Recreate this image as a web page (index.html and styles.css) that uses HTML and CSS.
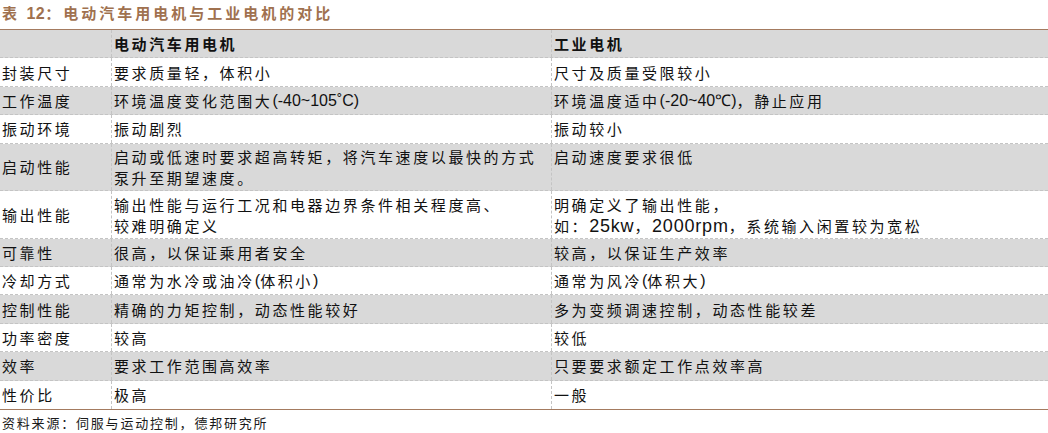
FILE: index.html
```html
<!DOCTYPE html>
<html lang="zh">
<head>
<meta charset="utf-8">
<link rel="stylesheet" href="styles.css">
</head>
<body>
<div class="page">
  <div class="title">表 <span class="num">12</span>：电动汽车用电机与工业电机的对比</div>
  <div class="table">
    <div class="row head gray">
      <div class="c1"></div>
      <div class="c2">电动汽车用电机</div>
      <div class="c3">工业电机</div>
    </div>
    <div class="row">
      <div class="c1">封装尺寸</div>
      <div class="c2">要求质量轻，体积小</div>
      <div class="c3">尺寸及质量受限较小</div>
    </div>
    <div class="row gray">
      <div class="c1">工作温度</div>
      <div class="c2">环境温度变化范围大<span class="lat">(-40~105˚C)</span></div>
      <div class="c3">环境温度适中<span class="lat">(-20~40℃)</span>，静止应用</div>
    </div>
    <div class="row">
      <div class="c1">振动环境</div>
      <div class="c2">振动剧烈</div>
      <div class="c3">振动较小</div>
    </div>
    <div class="row gray double">
      <div class="c1">启动性能</div>
      <div class="c2">启动或低速时要求超高转矩，将汽车速度以最快的方式<br>泵升至期望速度。</div>
      <div class="c3">启动速度要求很低</div>
    </div>
    <div class="row double">
      <div class="c1">输出性能</div>
      <div class="c2">输出性能与运行工况和电器边界条件相关程度高、<br>较难明确定义</div>
      <div class="c3">明确定义了输出性能，<br>如：<span class="lat big">25kw</span>，<span class="lat big">2000rpm</span>，系统输入闲置较为宽松</div>
    </div>
    <div class="row gray">
      <div class="c1">可靠性</div>
      <div class="c2">很高，以保证乘用者安全</div>
      <div class="c3">较高，以保证生产效率</div>
    </div>
    <div class="row">
      <div class="c1">冷却方式</div>
      <div class="c2">通常为水冷或油冷<span class="lat">(</span>体积小<span class="lat">)</span></div>
      <div class="c3">通常为风冷<span class="lat">(</span>体积大<span class="lat">)</span></div>
    </div>
    <div class="row gray">
      <div class="c1">控制性能</div>
      <div class="c2">精确的力矩控制，动态性能较好</div>
      <div class="c3">多为变频调速控制，动态性能较差</div>
    </div>
    <div class="row">
      <div class="c1">功率密度</div>
      <div class="c2">较高</div>
      <div class="c3">较低</div>
    </div>
    <div class="row gray">
      <div class="c1">效率</div>
      <div class="c2">要求工作范围高效率</div>
      <div class="c3">只要要求额定工作点效率高</div>
    </div>
    <div class="row last">
      <div class="c1">性价比</div>
      <div class="c2">极高</div>
      <div class="c3">一般</div>
    </div>
  </div>
  <div class="source">资料来源：伺服与运动控制，德邦研究所</div>
</div>
</body>
</html>
```

FILE: styles.css
```css
html, body {
  margin: 0;
  padding: 0;
  background: #ffffff;
}

.page {
  width: 1048px;
  height: 433px;
  overflow: hidden;
  font-family: "Noto Sans CJK SC", "Noto Sans", sans-serif;
  color: #111111;
}

.title {
  height: 29px;
  line-height: 25px;
  padding-left: 2px;
  font-size: 15px;
  font-weight: bold;
  letter-spacing: 3px;
  color: #a0714f;
  box-sizing: border-box;
}

.title .num {
  font-family: "Liberation Sans", Arial, sans-serif;
  font-size: 16px;
  letter-spacing: 0.5px;
}

.table {
  border-top: 1.5px solid #a47b60;
  border-bottom: 1.5px solid #a47b60;
}

.row {
  display: grid;
  grid-template-columns: 112px 440px 1fr;
  height: 28.4px;
  border-bottom: 1px dashed #c4c4c4;
  box-sizing: border-box;
}

.row.double {
  height: 47.5px;
}

.row.last {
  border-bottom: none;
}

.row.gray {
  background: #d9d9d9;
}

.row > div {
  display: flex;
  align-items: center;
  font-size: 15px;
  letter-spacing: 2.6px;
  line-height: 21px;
  white-space: nowrap;
}

.row .c1 {
  padding-left: 2px;
  border-right: 1px dashed #c4c4c4;
}

.row .c2 {
  padding-left: 2px;
  border-right: 1px dashed #c4c4c4;
}

.row .c3 {
  padding-left: 2px;
}

.row.double .c2,
.row.double .c3 {
  display: block;
  padding-top: 2.5px;
}

.row.head > div {
  font-weight: bold;
  letter-spacing: 2.6px;
}

.lat {
  font-family: "Liberation Sans", Arial, sans-serif;
  font-size: 16px;
  letter-spacing: 0;
}

.lat.big {
  font-size: 18px;
  letter-spacing: 0.8px;
}

.source {
  padding-left: 2px;
  padding-top: 4px;
  font-size: 13px;
  letter-spacing: 1.8px;
  line-height: 18px;
  color: #1a1a1a;
}
```
